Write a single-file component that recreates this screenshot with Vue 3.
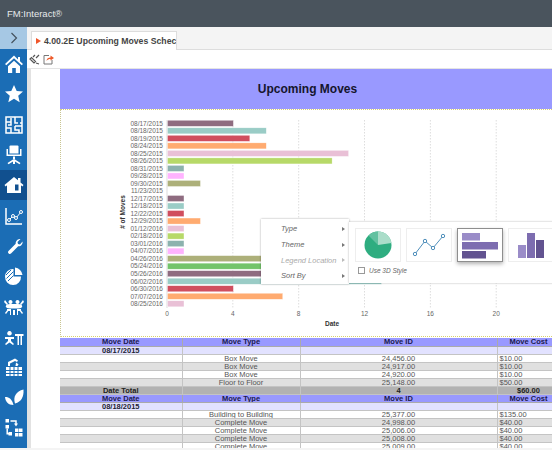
<script setup>
// sidebar icons, drawn on a 20x20 box. d = filled, s = stroked, k = knocked out lines, w = window in the active colour
const navIcons = [
  { d: ['M10 1.500 1 10l1.300 1.300L10 4.200l7.700 7.100L19 10l-3-2.800V3h-2v2.400z', 'M4 12.300 10 6.800l6 5.500V19h-4.200v-5H8.200v5H4z'] },
  { d: ['M10 1l2.700 6 6.300.6-4.800 4.200 1.500 6.400L10 14.800 4.300 18.200l1.500-6.400L1 7.600 7.300 7z'] },
  { s: ['M2 2h16v16H2z', 'M2 7h5M7 3v7H4M11 2v6h3M18 8h-2M2 13h5v5M11 11v4h4v3M11 11h7'] },
  { d: ['M6.500 .5h7a1 1 0 0 1 1 1v7h-9v-7a1 1 0 0 1 1-1z', 'M2.500 4H4v5.500h12V4h1.500v7h-15z', 'M9 11.500h2v3H9z', 'M3.500 18l5.500-3.500h2l5.500 3.500-1 1.200-4.500-2.700v2.500H9v-2.500l-4.500 2.700z'] },
  { d: ['M10 2 .5 10l1.200 1.400L3 10.300V18h14v-7.700l1.300 1.100 1.200-1.400-3-2.500V3h-2.500v2.200z'], w: ['M11 9.500v6h3.500v-6z'] },
  { s: ['M2 2v16h16'], t: ['M5 14l4-4 3 2 5-6'], c: [[5, 14], [9, 10], [12, 12], [17, 6]] },
  { d: ['M18.500 5.500c.5 2.500-1.500 5-4.300 4.800L7 17.500c-1.500 1.500-4-.9-2.500-2.500l7.200-7.200C11.400 5 14 2.500 16.500 3l-3 3 .5 2 2 .5z'] },
  { d: ['M11 1.500a8.500 8.500 0 0 1 7.500 7.500H11z', 'M9.500 3v7.500H17A8 8 0 1 1 9.500 3z'], k: ['M2 9l5-5M2.500 12.500l7-7M4 15l5.500-5.500'] },
  { d: ['M6 7h8a4 2.200 0 0 1 0 4.500H6A4 2.200 0 0 1 6 7z', 'M9 13h2v5H9z', 'M6.500 3a2 2 0 1 0 .01 0zM13.500 3a2 2 0 1 0 .01 0z', 'M1 3l3 4-1 1-3-3zM19 3l-3 4 1 1 3-3zM1 16l3-4 1 1-3 4zM19 16l-3-4-1 1 3 4z', 'M3 12h4v6H6v-4H3zM13 14h4v-2h-4zM13 14h1v4h-1z'] },
  { d: ['M5.500 4a2.300 2.300 0 1 0 .01 0z', 'M1 10h9v2H7v2l3 3-1 1-3.500-2.500L2 18l-1-1 3-3v-2H1z', 'M11 7h8.500v2H18v9h-1.500V9H15v9h-1.500V9H11z'] },
  { d: ['M2 10h16v9H2z', 'M4 9V5l7-3.500 3 2-1 1.500-2-1-5 2.500V9z', 'M12 5.500l2.500 1.800-1 1.700h-2z'], k: ['M2 13.500h16M2 16.500h16M6 10v9M10 10v9M14 10v9'] },
  { d: ['M9.500 18C4 18 1.500 14.500 1 10c3.500-.3 7 1.700 8.500 8z', 'M11 16.500C8.800 10 12 4 19.500 2.500 20 9 17.500 15 11 16.500z'] },
  { d: ['M1.500 1H5v3.500H1.500zM1.500 7H5v3.500H1.500zM4.500 14H8v3.500H4.500z', 'M11 10.500h3.500V14H11zM15 10.500h3.500V14H15zM11 15h3.500v3.500H11zM15 15h3.500v3.500H15z', 'M12 8.500 10 5.500h4z'], s: ['M3.200 10.500V15.700H5', 'M6.500 3H12v3'] }
]

const palette = ['#8f6c80', '#9accc6', '#d04e5e', '#ffab70', '#e9c0d6', '#b7d968', '#8cb2ae', '#ffb3ff', '#adb07a', '#73c46a']
const rows = [
  ['08/17/2015', 4], ['08/18/2015', 6], ['08/19/2015', 5], ['08/24/2015', 6], ['08/25/2015', 11],
  ['08/26/2015', 10], ['08/31/2015', 1], ['09/28/2015', 1], ['09/30/2015', 2], ['11/23/2015', 0],
  ['12/17/2015', 1], ['12/18/2015', 1], ['12/22/2015', 1], ['12/29/2015', 2], ['01/12/2016', 1],
  ['02/18/2016', 1], ['03/01/2016', 1], ['04/07/2016', 1], ['04/26/2016', 8], ['05/24/2016', 8],
  ['05/26/2016', 8], ['06/02/2016', 13], ['06/30/2016', 4], ['07/07/2016', 7], ['08/25/2016', 1]
]
const bars = rows.map(([label, value], i) => ({
  label,
  y: 123.300 + i * 7.520,
  w: value * 16.460,
  color: palette[i % palette.length]
}))
const ticks = [0, 4, 8, 12, 16, 20].map((t) => ({ t, x: 167 + t * 16.460 }))

const menu = [
  { label: 'Type' },
  { label: 'Theme' },
  { label: 'Legend Location', off: true },
  { label: 'Sort By' }
]

const heads = ['Move Date', 'Move Type', 'Move ID', 'Move Cost']
const groups = [
  {
    date: '08/17/2015',
    moves: [
      ['Box Move', '24,456.00', '$10.00'],
      ['Box Move', '24,917.00', '$10.00'],
      ['Box Move', '24,920.00', '$10.00'],
      ['Floor to Floor', '25,148.00', '$50.00']
    ],
    total: ['4', '$60.00']
  },
  {
    date: '08/18/2015',
    moves: [
      ['Building to Building', '25,377.00', '$135.00'],
      ['Complete Move', '24,998.00', '$40.00'],
      ['Complete Move', '25,006.00', '$40.00'],
      ['Complete Move', '25,008.00', '$40.00'],
      ['Complete Move', '25,009.00', '$40.00']
    ]
  }
]
</script>

<template>
  <div class="app">
    <header class="topbar">FM:Interact®</header>
    <div class="main">
      <nav class="nav">
        <div class="nav-toggle">
          <svg width="8" height="12" viewBox="0 0 8 12"><path d="M1.500 1l5 5-5 5" fill="none" stroke="#44525e" stroke-width="1.200" /></svg>
        </div>
        <div v-for="(icon, i) in navIcons" :key="i" class="nav-item" :class="{ active: i === 4 }">
          <svg width="20" height="20" viewBox="0 0 20 20">
            <path v-for="d in icon.d" :key="d" :d="d" fill="#fff" />
            <path v-for="w in icon.w" :key="w" :d="w" fill="#11508f" />
            <path v-for="k in icon.k" :key="k" :d="k" fill="none" stroke="#1b6db5" stroke-width="1" />
            <path v-for="s in icon.s" :key="s" :d="s" fill="none" stroke="#fff" stroke-width="1.500" />
            <path v-if="icon.t" :d="icon.t[0]" fill="none" stroke="#fff" stroke-width="1" />
            <circle v-for="c in icon.c" :key="c[0]" :cx="c[0]" :cy="c[1]" r="1.500" fill="#1b6db5" stroke="#fff" />
          </svg>
        </div>
      </nav>

      <section class="workspace">
        <div class="tabs">
          <div class="tab">
            <span class="tab-mark"></span>
            <span class="tab-title">4.00.2E Upcoming Moves Schec</span>
          </div>
        </div>
        <div class="toolbar">
          <svg width="11" height="11" viewBox="0 0 11 11">
            <path d="M1 5l4 4 1.500-1.500-4-4zM4 3l2-2M7 4l3-3M7 9l3 1" fill="none" stroke="#555" stroke-width="1.200" />
          </svg>
          <svg width="11" height="11" viewBox="0 0 11 11">
            <path d="M6 1.500H1V10h8V6" fill="none" stroke="#777" />
            <path d="M3.500 7c0-2.500 2-3.500 4-3.500V1.500L11 4 7.500 6.500V5c-1.500 0-3 .5-4 2z" fill="#ee5a2a" />
          </svg>
        </div>

        <div class="page">
          <div class="gutter"></div>
          <div class="report">
            <div class="report-title">Upcoming Moves</div>

            <div class="chart">
              <svg class="chart-svg" width="500" height="227" viewBox="60 110 500 227">
                <line v-for="tick in ticks" :key="tick.t" :x1="tick.x" :x2="tick.x" y1="120" y2="308"
                  stroke="#ddd" stroke-width="1" :stroke-dasharray="tick.t ? '1.500 1.500' : ''" />
                <g v-for="bar in bars" :key="bar.label + bar.y">
                  <text class="tick" :x="163" :y="bar.y + 2.300" text-anchor="end">{{ bar.label }}</text>
                  <rect v-if="bar.w" :x="167.500" :y="bar.y - 3" :width="bar.w" height="6" :fill="bar.color" stroke="#fff" stroke-opacity=".6" stroke-width=".5" />
                </g>
                <text v-for="tick in ticks" :key="'l' + tick.t" class="tick" :x="tick.x" y="316" text-anchor="middle">{{ tick.t }}</text>
                <text class="axis-name" x="332" y="326" text-anchor="middle">Date</text>
                <text class="axis-name" transform="translate(125 212) rotate(-90)" text-anchor="middle"># of Moves</text>
              </svg>

              <div class="ctx-menu">
                <div v-for="item in menu" :key="item.label" class="ctx-item" :class="{ off: item.off }">
                  <span>{{ item.label }}</span><i class="caret"></i>
                </div>
              </div>

              <div class="type-panel">
                <div class="thumbs">
                  <div class="thumb">
                    <svg width="30" height="30" viewBox="0 0 30 30">
                      <circle cx="15" cy="15" r="13.500" fill="#2ead80" />
                      <path d="M15 15 5.500 5.500A13.500 13.500 0 0 1 15 1.500z" fill="#62c1a0" />
                      <path d="M15 15V1.500A13.500 13.500 0 0 1 28.500 13z" fill="#aaddc9" />
                    </svg>
                  </div>
                  <div class="thumb">
                    <svg width="34" height="24" viewBox="0 0 34 24">
                      <path d="M3 21l10-13 8 7L31 3" fill="none" stroke="#4f8fbb" />
                      <circle cx="3" cy="21" r="1.700" fill="#fff" stroke="#4f8fbb" />
                      <circle cx="13" cy="8" r="1.700" fill="#fff" stroke="#4f8fbb" />
                      <circle cx="21" cy="15" r="1.700" fill="#fff" stroke="#4f8fbb" />
                      <circle cx="31" cy="3" r="1.700" fill="#fff" stroke="#4f8fbb" />
                    </svg>
                  </div>
                  <div class="thumb selected">
                    <svg width="38" height="27" viewBox="0 0 38 27">
                      <rect x="1" y="1" width="18" height="7.500" fill="#9a8cc8" />
                      <rect x="1" y="10" width="36" height="7.500" fill="#7d6db0" />
                      <rect x="1" y="19" width="24" height="7.500" fill="#625390" />
                    </svg>
                  </div>
                  <div class="thumb">
                    <svg width="28" height="27" viewBox="0 0 28 27">
                      <rect x="1" y="13" width="8" height="13" fill="#9a8cc8" />
                      <rect x="10" y="1" width="8" height="25" fill="#7d6db0" />
                      <rect x="19" y="8" width="8" height="18" fill="#625390" />
                    </svg>
                  </div>
                </div>
                <label class="style-3d"><span class="check"></span>Use 3D Style</label>
              </div>
            </div>

            <table class="grid">
              <colgroup>
                <col class="c1" /><col class="c2" /><col class="c3" /><col class="c4" />
              </colgroup>
              <template v-for="group in groups" :key="group.date">
                <tr class="head">
                  <td v-for="h in heads" :key="h">{{ h }}</td>
                </tr>
                <tr class="date">
                  <td>{{ group.date }}</td><td></td><td></td><td></td>
                </tr>
                <tr v-for="(move, i) in group.moves" :key="move[1]" :class="{ alt: i % 2 === 1 }">
                  <td></td>
                  <td>{{ move[0] }}</td>
                  <td>{{ move[1] }}</td>
                  <td class="cost">{{ move[2] }}</td>
                </tr>
                <tr v-if="group.total" class="total">
                  <td>Date Total</td><td></td>
                  <td>{{ group.total[0] }}</td>
                  <td>{{ group.total[1] }}</td>
                </tr>
              </template>
            </table>
          </div>
        </div>
      </section>
    </div>
    <div class="footline"></div>
  </div>
</template>

<style>
html, body { margin: 0; background: #fff; }
</style>

<style scoped>
.app {
  width: 552px; height: 450px; overflow: hidden; position: relative;
  display: flex; flex-direction: column;
  font-family: "Liberation Sans", Arial, sans-serif;
}
.topbar {
  height: 27px; flex: none; background: #4a545d; color: #e6e9eb;
  padding-left: 7px; font-size: 9.500px; line-height: 27px;
}
.main { flex: 1; display: flex; min-height: 0; }

/* left icon rail */
.nav { width: 27px; flex: none; background: #1b6db5; height: 421px; }
.nav-toggle {
  height: 22px; background: #a6c8e4;
  display: flex; align-items: center; justify-content: center;
}
.nav-item { height: 30.300px; display: flex; align-items: center; justify-content: center; }
.nav-item.active { background: #11508f; }

.workspace { flex: 1; min-width: 0; display: flex; flex-direction: column; }
.tabs {
  height: 23px; flex: none; background: #f4f4f4; padding: 4px 0 0 4px;
  box-sizing: border-box; border-bottom: 1px solid #ddd;
}
.tab {
  width: 146px; height: 19px; background: #fff; border: 1px solid #ddd; border-bottom: 0;
  box-sizing: border-box; display: flex; align-items: center; padding-left: 4px; overflow: hidden;
}
.tab-mark {
  width: 0; height: 0; flex: none; margin-right: 3px;
  border-left: 5px solid #f0562a; border-top: 3px solid transparent; border-bottom: 3px solid transparent;
}
.tab-title { font-size: 8.700px; font-weight: 700; color: #444; white-space: nowrap; }
.toolbar {
  height: 19px; flex: none; display: flex; align-items: center; gap: 3px; padding-left: 2px;
  background: #fff; border-bottom: 1px solid #e4e4e4; box-sizing: border-box;
}
.page { flex: 1; min-height: 0; display: flex; background: #fff; overflow: hidden; }
.gutter { width: 33px; flex: none; border-left: 4px solid #e2e2e2; box-sizing: border-box; }
.report { width: 492px; flex: none; position: relative; }
.report-title {
  height: 40px; background: #9999ff; color: #15152d; text-align: center; padding-left: 3px; box-sizing: border-box;
  font-size: 12px; font-weight: 700; line-height: 40px;
}

/* chart area */
.chart {
  height: 228px; position: relative;
  border-top: 1px dotted #d8d070; border-bottom: 1px dotted #d8d070; border-left: 1px dotted #c8c490;
  box-sizing: border-box; overflow: hidden;
}
.chart-svg { display: block; margin-left: -1px; }
.tick { font-size: 6.500px; fill: #666; }
.axis-name { font-size: 6.500px; font-weight: 700; fill: #333; }

.ctx-menu {
  position: absolute; left: 200px; top: 109px; width: 88px; height: 65px;
  background: #fff; box-shadow: 0 0 2px rgba(0, 0, 0, .35);
  padding-top: 2px; box-sizing: border-box;
}
.ctx-item {
  height: 15.700px; padding-left: 20px; display: flex; align-items: center;
  font-size: 7.500px; font-style: italic; color: #666; position: relative;
}
.ctx-item.off { color: #aaa; }
.caret {
  position: absolute; right: 4px; top: 6px; width: 0; height: 0;
  border-left: 3px solid #777; border-top: 2px solid transparent; border-bottom: 2px solid transparent;
}
.ctx-item.off .caret { border-left-color: #bbb; }

.type-panel {
  position: absolute; left: 288px; top: 112px; width: 210px; height: 61px;
  background: #fff; box-shadow: 0 0 2px rgba(0, 0, 0, .3);
  padding: 6px 0 0 6px; box-sizing: border-box;
}
.thumbs { display: flex; gap: 5px; }
.thumb {
  width: 46px; height: 34px; flex: none; box-sizing: border-box; border: 1px solid #eee;
  display: flex; align-items: center; justify-content: center;
}
.thumb.selected { border: 1.500px solid #8e8e8e; box-shadow: 0 2px 4px rgba(0, 0, 0, .3); }
.style-3d {
  display: flex; align-items: center; gap: 4px; margin: 5px 0 0 3px;
  font-size: 6.500px; font-style: italic; color: #666;
}
.check { width: 7px; height: 7px; border: 1px solid #999; box-sizing: border-box; }

/* report table */
.grid {
  width: 500px; table-layout: fixed; border-collapse: collapse; margin-top: 1px;
  font-size: 7.500px; color: #555; text-align: center;
}
.c1 { width: 122px; }
.c2 { width: 118px; }
.c3 { width: 197px; }
.c4 { width: 63px; }
.grid tr { height: 8px; }
.grid td { padding: 0; line-height: 7px; border: 1px solid #c4c4c4; border-width: 0 1px 1px 0; white-space: nowrap; overflow: hidden; }
.alt td { background: #e0e0e0; }
.head td { background: #9999ff; color: #1a1a50; font-weight: 700; border-color: #aaa; }
.date td { background: #e2e2ff; color: #223; font-weight: 700; }
.total td { background: #b2b2b2; color: #222; font-weight: 700; }
.cost { text-align: left; padding-left: 2px !important; }
.footline { position: absolute; left: 0; right: 0; bottom: 0; height: 2px; background: #f4f4f4; }
</style>
